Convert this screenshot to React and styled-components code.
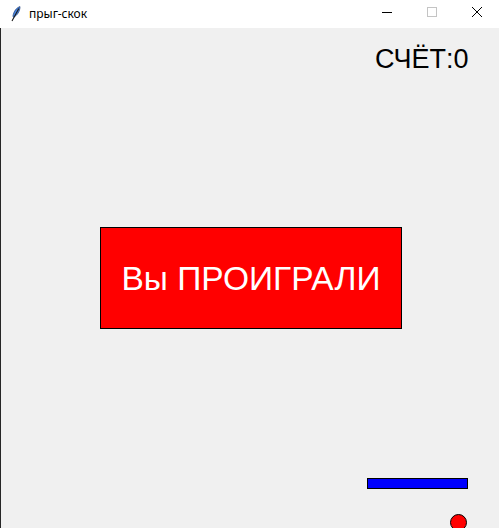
import React from "react";
import styled, { createGlobalStyle } from "styled-components";

const Global = createGlobalStyle`
  html, body { margin: 0; padding: 0; background: #f0f0f0; }
  body { font-family: "Liberation Sans", Arial, sans-serif; overflow: hidden; }
`;

const Window = styled.div`
  width: 499px;
  height: 528px;
  display: flex;
  flex-direction: column;
  overflow: hidden;
`;

const TitleBar = styled.div`
  height: 28px;
  flex: none;
  background: #ffffff;
  display: flex;
  align-items: center;
  padding-left: 11px;
  box-sizing: border-box;
`;

const Title = styled.span`
  font-family: "Noto Sans", "Liberation Sans", sans-serif;
  font-size: 12px;
  color: #000;
  margin-left: 8px;
  margin-top: -1px;
`;

const Controls = styled.div`
  margin-left: auto;
  display: flex;
  height: 100%;
`;

const CtrlBtn = styled.div`
  width: 45px;
  height: 100%;
  display: flex;
  align-items: center;
  justify-content: center;
  margin-top: -2px;
`;

const Canvas = styled.div`
  position: relative;
  flex: 1;
  background: #f0f0f0;
  border-left: 1px solid #262626;
`;

const Score = styled.div`
  position: absolute;
  left: ${(p) => p.x}px;
  top: ${(p) => p.y}px;
  font-size: 27px;
  color: #000;
  line-height: 1;
`;

const Rect = styled.div`
  position: absolute;
  left: ${(p) => p.x}px;
  top: ${(p) => p.y}px;
  width: ${(p) => p.w}px;
  height: ${(p) => p.h}px;
  background: ${(p) => p.fill};
  border: 1px solid #000;
  box-sizing: border-box;
  border-radius: ${(p) => (p.round ? "50%" : "0")};
  display: flex;
  align-items: center;
  justify-content: center;
`;

const Message = styled.span`
  color: #fff;
  font-size: 33.5px;
  line-height: 1;
  margin-top: 1px;
`;

const Feather = () => (
  <svg width="10" height="16" viewBox="0 0 10 16">
    <path d="M9 0.6 C5.8 1.6 2.6 5 1.9 10.5 L2.7 11.2 C6 9.5 9 5.5 9 0.6 Z" fill="#4a86e0" stroke="#1d3d78" strokeWidth="0.7" />
    <path d="M7.8 2.4 L1 15" stroke="#1a1a1a" strokeWidth="1.1" />
  </svg>
);

export default function App() {
  return (
    <>
      <Global />
      <Window>
        <TitleBar>
          <Feather />
          <Title>прыг-скок</Title>
          <Controls>
            <CtrlBtn>
              <svg width="10" height="10" viewBox="0 0 10 10">
                <path d="M0 5.5 H10" stroke="#000" strokeWidth="1" />
              </svg>
            </CtrlBtn>
            <CtrlBtn>
              <svg width="10" height="10" viewBox="0 0 10 10">
                <rect x="0.5" y="0.5" width="9" height="9" fill="none" stroke="#c4c4c4" strokeWidth="1" />
              </svg>
            </CtrlBtn>
            <CtrlBtn>
              <svg width="10" height="10" viewBox="0 0 10 10">
                <path d="M0 0 L10 10 M10 0 L0 10" stroke="#000" strokeWidth="1" />
              </svg>
            </CtrlBtn>
          </Controls>
        </TitleBar>
        <Canvas>
          <Score x={374} y={18}>СЧЁТ:0</Score>
          <Rect x={99} y={199} w={302} h={102} fill="#ff0000">
            <Message>Вы ПРОИГРАЛИ</Message>
          </Rect>
          <Rect x={366} y={450} w={101} h={11} fill="#0000ff" />
          <Rect x={449} y={486} w={17} h={17} fill="#ff0000" round />
        </Canvas>
      </Window>
    </>
  );
}
